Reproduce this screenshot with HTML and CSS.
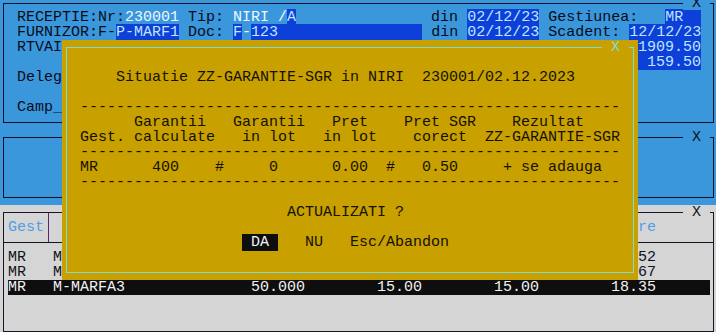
FILE: index.html
```html
<!DOCTYPE html>
<html>
<head>
<meta charset="utf-8">
<link rel="stylesheet" href="styles.css">
</head>
<body>
<div class="screen">
  <div class="blue-area">
    <div class="win win1">
      <span class="wtitle t-blue"> X </span>
      <div class="rows">
        <div class="row"><span class="dk">RECEPTIE:Nr:</span><span class="wh">230001</span><span class="dk"> Tip: </span><span class="wh">NIRI /</span><span class="hl">A</span><span class="dk">               din </span><span class="hl">02/12/23</span><span class="dk"> Gestiunea:   </span><span class="hl">MR  </span></div>
        <div class="row"><span class="dk">FURNIZOR:F-</span><span class="hl">P-MARF1</span><span class="dk"> Doc: </span><span class="hl">F</span><span class="wh">-</span><span class="hl">123                </span><span class="dk"> din </span><span class="hl">02/12/23</span><span class="dk"> Scadent: </span><span class="hl">12/12/23</span></div>
        <div class="row split"><span class="dk">RTVAI</span><span class="hl field"> 1909.50</span></div>
        <div class="row split"><span class="dk"></span><span class="hl field">  159.50</span></div>
        <div class="row"><span class="dk">Delegat</span></div>
        <div class="row"></div>
        <div class="row"><span class="dk">Camp_</span></div>
      </div>
    </div>
    <div class="win win2">
      <span class="wtitle t-blue"> X </span>
    </div>
  </div>
  <div class="grey-area">
    <div class="win win3">
      <span class="wtitle t-grey"> X </span>
      <div class="thead">
        <div class="th th-gest">Gest</div>
        <div class="th th-rest">Pret vanzare</div>
      </div>
      <div class="tbody">
        <div class="trow">MR   M-MARFA1              10.000        20.00        20.00        24.52      </div>
        <div class="trow">MR   M-MARFA2              20.000        25.00        25.00        30.67      </div>
        <div class="trow sel">MR   M-MARFA3              50.000        15.00        15.00        18.35      </div>
      </div>
    </div>
  </div>
  <div class="dialog">
    <div class="dlg-inner">
      <span class="dtitle"> X </span>
      <div class="drow"></div>
      <div class="drow">    Situatie ZZ-GARANTIE-SGR in NIRI  230001/02.12.2023</div>
      <div class="drow"></div>
      <div class="drow">------------------------------------------------------------</div>
      <div class="drow">      Garantii   Garantii   Pret    Pret SGR    Rezultat</div>
      <div class="drow">Gest. calculate   in lot   in lot    corect  ZZ-GARANTIE-SGR</div>
      <div class="drow">------------------------------------------------------------</div>
      <div class="drow">MR      400    #     0      0.00  #   0.50     + se adauga</div>
      <div class="drow">------------------------------------------------------------</div>
      <div class="drow"></div>
      <div class="drow">                       ACTUALIZATI ?</div>
      <div class="drow"></div>
      <div class="drow">                  <span class="btn"> DA </span>   NU   Esc/Abandon</div>
    </div>
  </div>
</div>
</body>
</html>
```
FILE: styles.css
```css
html, body {
  margin: 0;
  padding: 0;
  background: #d5d5d5;
}

.screen {
  position: relative;
  width: 716px;
  height: 332px;
  overflow: hidden;
  font-family: "Liberation Mono", "DejaVu Sans Mono", monospace;
  font-size: 15px;
  line-height: 15px;
}

.blue-area {
  height: 205px;
  box-sizing: border-box;
  padding-top: 3px;
  background: #3b97dc;
}

.grey-area {
  height: 127px;
  box-sizing: border-box;
  padding-top: 7px;
  background: #d5d5d5;
}

.win {
  position: relative;
  box-sizing: border-box;
  width: 711px;
  margin-left: 3px;
  border: 1px solid #0b1228;
}

.win1 { height: 120px; }
.win2 { height: 61px; margin-top: 14px; }
.win3 { height: 120px; border-color: #1a1526; }

.wtitle {
  position: absolute;
  top: -6px;
  left: 679px;
  height: 12px;
  line-height: 12px;
  white-space: pre;
  color: #0b1228;
}
.t-blue { background: #3b97dc; }
.t-grey { background: #d5d5d5; color: #14141e; }

.rows {
  width: 684px;
  padding: 6px 0 0 13px;
}

.row {
  height: 15px;
  white-space: pre;
}

.split {
  display: flex;
  justify-content: space-between;
}

.dk { color: #080c18; }
.wh { color: #eef6ff; }
.hl { background: #0d3fd9; color: #bfe6ff; }
.field { width: 72px; text-align: right; }

.thead {
  display: flex;
  height: 29px;
  border-bottom: 1px solid #14121c;
}

.th {
  box-sizing: border-box;
  padding-top: 7px;
  color: #4d9fe6;
  white-space: pre;
}

.th-gest {
  width: 45px;
  padding-left: 4px;
  border-right: 1px solid #5a2470;
}

.th-rest {
  flex: 1;
  text-align: right;
  padding-right: 57px;
}

.tbody {
  padding: 7px 0 0 4px;
}

.trow {
  width: 702px;
  height: 15px;
  white-space: pre;
  color: #101018;
}

.trow.sel {
  background: #0e0e0e;
  color: #f2f2f2;
}

.dialog {
  position: absolute;
  left: 62px;
  top: 40px;
  width: 576px;
  height: 240px;
  box-sizing: border-box;
  padding: 7px 4px;
  background: #c8a000;
}

.dlg-inner {
  position: relative;
  box-sizing: border-box;
  height: 226px;
  border: 1px solid #7fdcd4;
  padding: 7px 0 0 13px;
  color: #141004;
}

.dtitle {
  position: absolute;
  top: -6px;
  left: 535px;
  height: 12px;
  line-height: 12px;
  white-space: pre;
  background: #c8a000;
  color: #7fdcd4;
}

.drow {
  height: 15px;
  white-space: pre;
}

.btn {
  background: #0e0e0e;
  color: #f4f4f4;
}
```
